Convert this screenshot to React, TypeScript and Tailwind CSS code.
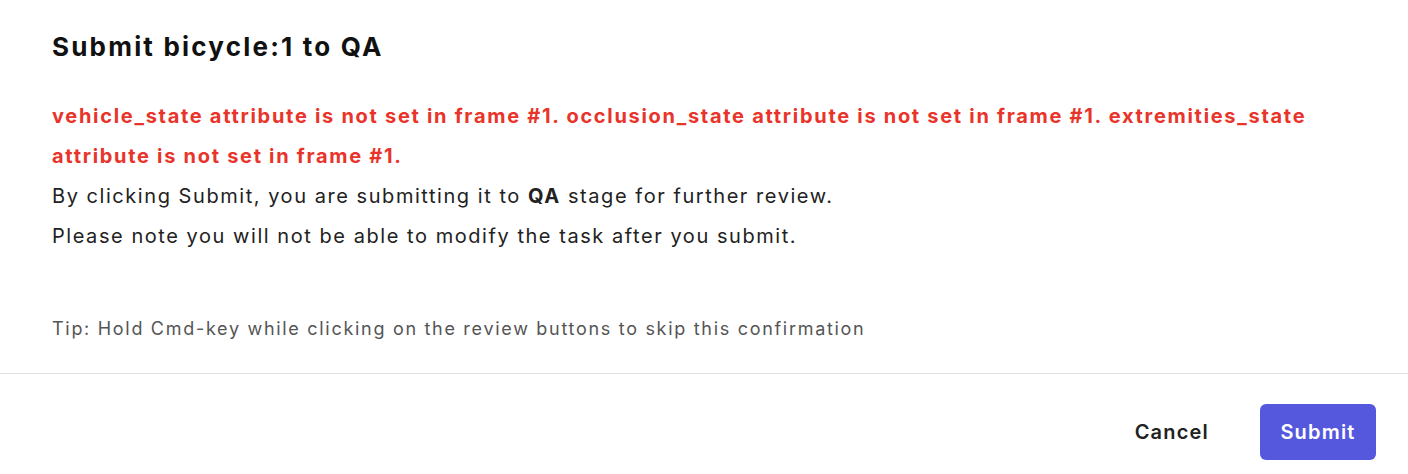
import React from "react";

export default function App() {
  return (
    <div className="w-[1408px] h-[474px] bg-white flex flex-col font-[Inter,sans-serif]">
      <div className="px-[52px] pt-[28px] pb-[30px] flex flex-col">
        <h1 className="text-[26px] leading-[38px] font-bold tracking-[2.2px] text-[#111]">Submit bicycle:1 to QA</h1>
        <div className="mt-[30px] text-[20px] leading-[40px]">
          <div className="font-bold tracking-[1.7px] text-[#e8342a]">
            vehicle_state attribute is not set in frame #1. occlusion_state attribute is not set in frame #1. extremities_state attribute is not set in frame #1.
          </div>
          <div className="text-[#222] tracking-[1.55px]">
            By clicking Submit, you are submitting it to <span className="font-bold">QA</span> stage for further review.
          </div>
          <div className="text-[#222] tracking-[1.55px]">Please note you will not be able to modify the task after you submit.</div>
        </div>
        <div className="mt-[59px] text-[18px] leading-[28px] tracking-[1.7px] text-[#555]">
          Tip: Hold Cmd-key while clicking on the review buttons to skip this confirmation
        </div>
      </div>
      <div className="border-t border-[#e2e2e2] flex justify-end items-center gap-[51px] pr-[32px] pt-[30px]">
        <button className="h-[56px] text-[20px] font-semibold tracking-[1.2px] text-[#222]">Cancel</button>
        <button className="h-[56px] w-[116px] rounded-[6px] bg-[#5558dd] text-white text-[20px] font-semibold tracking-[1.2px]">Submit</button>
      </div>
    </div>
  );
}
